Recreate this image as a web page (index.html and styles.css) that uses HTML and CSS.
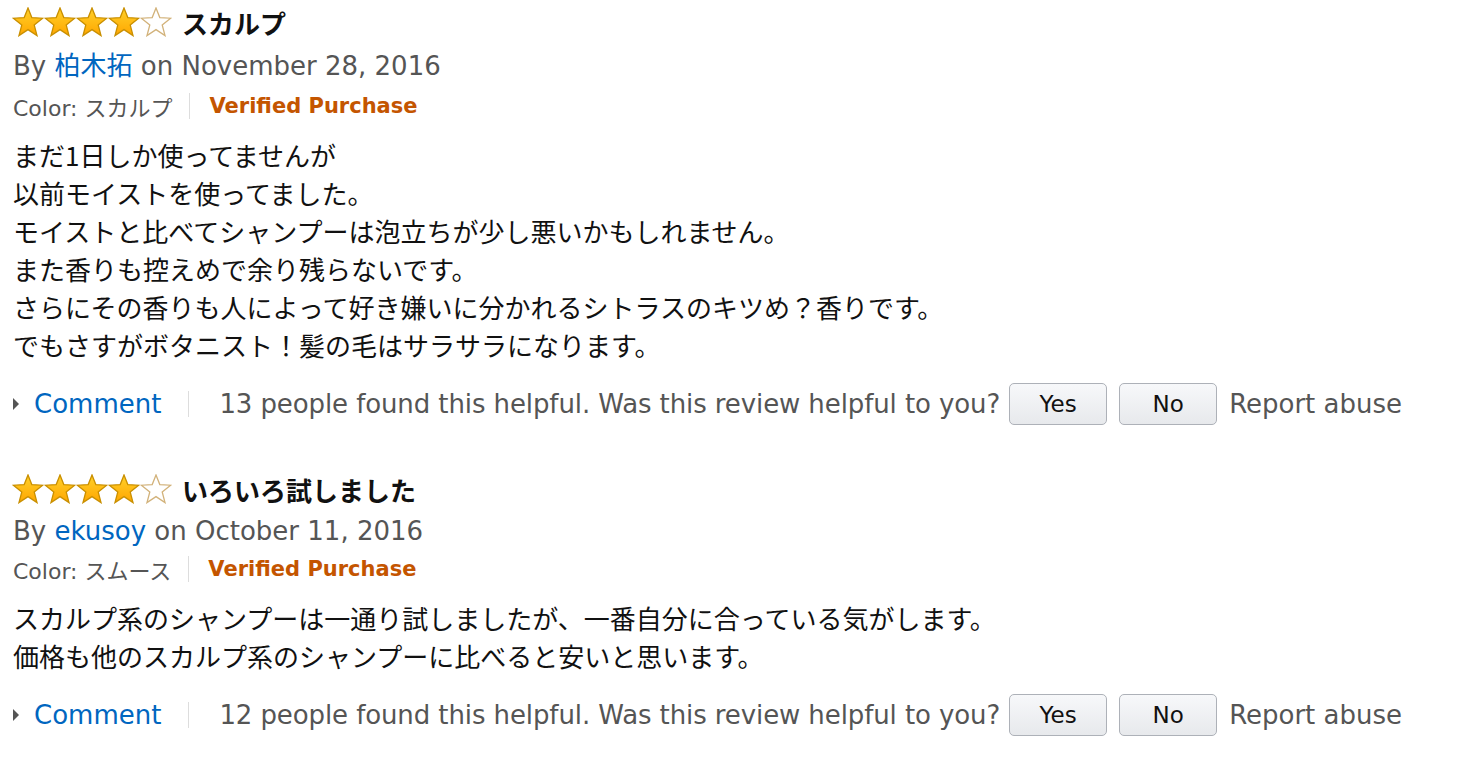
FILE: index.html
```html
<!DOCTYPE html>
<html lang="ja">
<head>
<meta charset="utf-8">
<title>Reviews</title>
<link rel="stylesheet" href="styles.css">
</head>
<body>
<svg class="defs" width="0" height="0" aria-hidden="true">
  <defs>
    <linearGradient id="gold" x1="0" y1="0" x2="0" y2="1">
      <stop offset="0" stop-color="#ffd12a"/>
      <stop offset="1" stop-color="#ffa600"/>
    </linearGradient>
    <symbol id="star" viewBox="0 0 32 30">
      <polygon points="16,1 19.8,10.6 30.6,11.2 22.2,18 25,28.6 16,22.6 7,28.6 9.8,18 1.4,11.2 12.2,10.6"/>
    </symbol>
  </defs>
</svg>
<div class="reviews">
  <div class="review">
    <div class="title-row">
      <div class="stars">
        <svg class="star full"><use href="#star"/></svg>
        <svg class="star full"><use href="#star"/></svg>
        <svg class="star full"><use href="#star"/></svg>
        <svg class="star full"><use href="#star"/></svg>
        <svg class="star empty"><use href="#star"/></svg>
      </div>
      <span class="title">スカルプ</span>
    </div>
    <div class="byline">By <a class="author tall">柏木拓</a> on November 28, 2016</div>
    <div class="meta"><span class="color">Color: スカルプ</span><span class="sep"></span><span class="verified">Verified Purchase</span></div>
    <div class="body">まだ1日しか使ってませんが<br>以前モイストを使ってました。<br>モイストと比べてシャンプーは泡立ちが少し悪いかもしれません。<br>また香りも控えめで余り残らないです。<br>さらにその香りも人によって好き嫌いに分かれるシトラスのキツめ？香りです。<br>でもさすがボタニスト！髪の毛はサラサラになります。</div>
    <div class="actions">
      <span class="tri"></span><a class="comment">Comment</a><span class="vsep"></span>
      <span class="helpful">13 people found this helpful. Was this review helpful to you?</span>
      <button class="btn">Yes</button><button class="btn">No</button>
      <span class="report">Report abuse</span>
    </div>
  </div>
  <div class="review">
    <div class="title-row">
      <div class="stars">
        <svg class="star full"><use href="#star"/></svg>
        <svg class="star full"><use href="#star"/></svg>
        <svg class="star full"><use href="#star"/></svg>
        <svg class="star full"><use href="#star"/></svg>
        <svg class="star empty"><use href="#star"/></svg>
      </div>
      <span class="title">いろいろ試しました</span>
    </div>
    <div class="byline">By <a class="author">ekusoy</a> on October 11, 2016</div>
    <div class="meta"><span class="color">Color: スムース</span><span class="sep"></span><span class="verified">Verified Purchase</span></div>
    <div class="body">スカルプ系のシャンプーは一通り試しましたが、一番自分に合っている気がします。<br>価格も他のスカルプ系のシャンプーに比べると安いと思います。</div>
    <div class="actions">
      <span class="tri"></span><a class="comment">Comment</a><span class="vsep"></span>
      <span class="helpful">12 people found this helpful. Was this review helpful to you?</span>
      <button class="btn">Yes</button><button class="btn">No</button>
      <span class="report">Report abuse</span>
    </div>
  </div>
</div>
</body>
</html>
```
FILE: styles.css
```css
html, body {
  margin: 0;
  padding: 0;
  background: #fff;
}
body {
  font-family: "DejaVu Sans", "Noto Sans CJK JP", sans-serif;
  color: #111;
}
.defs {
  position: absolute;
  width: 0;
  height: 0;
}
.reviews {
  padding: 2px 0 0 13px;
}
.review {
  margin-bottom: 44px;
}
.title-row {
  display: flex;
  align-items: center;
  height: 40px;
}
.stars {
  display: flex;
  margin-left: -1px;
}
.star {
  width: 32px;
  height: 30px;
  display: block;
}
.star.full {
  fill: url(#gold);
  stroke: #c98f00;
  stroke-width: 1.3;
}
.star.empty {
  fill: #fff;
  stroke: #d2b27a;
  stroke-width: 1.3;
}
.title {
  margin-left: 10px;
  font-family: "Noto Sans CJK JP", sans-serif;
  font-weight: 700;
  font-size: 26px;
  color: #111;
}
.byline {
  font-size: 26px;
  line-height: 44px;
  color: #555;
}
.author {
  color: #0066c0;
  font-family: "DejaVu Sans", "Noto Sans CJK JP", sans-serif;
}
.author.tall {
  line-height: 48px;
}
.meta {
  display: flex;
  align-items: center;
  height: 32px;
}
.color {
  font-size: 22px;
  color: #555;
}
.sep {
  width: 1px;
  height: 26px;
  background: #ddd;
  margin: 0 19px 0 17px;
}
.verified {
  font-size: 21px;
  font-weight: 700;
  color: #c45500;
}
.body {
  margin-top: 14px;
  font-family: "Noto Sans CJK JP", sans-serif;
  font-size: 26px;
  line-height: 38px;
  color: #111;
}
.actions {
  margin-top: 19px;
  display: flex;
  align-items: center;
  height: 42px;
  font-size: 26px;
  color: #555;
}
.tri {
  width: 0;
  height: 0;
  border-left: 6px solid #555;
  border-top: 6px solid transparent;
  border-bottom: 6px solid transparent;
  margin-right: 15px;
}
.comment {
  color: #0066c0;
}
.vsep {
  width: 1px;
  height: 26px;
  background: #ddd;
  margin: 0 30px 0 27px;
}
.helpful {
  letter-spacing: -0.1px;
}
.btn {
  width: 98px;
  height: 42px;
  margin-left: 9px;
  border: 1px solid #adb1b8;
  border-radius: 5px;
  background: linear-gradient(#f7f8fa, #e7e9ec);
  font-family: "DejaVu Sans", sans-serif;
  font-size: 23px;
  color: #111;
  padding: 0;
}
.btn + .btn {
  margin-left: 12px;
}
.report {
  margin-left: 12px;
}
```
